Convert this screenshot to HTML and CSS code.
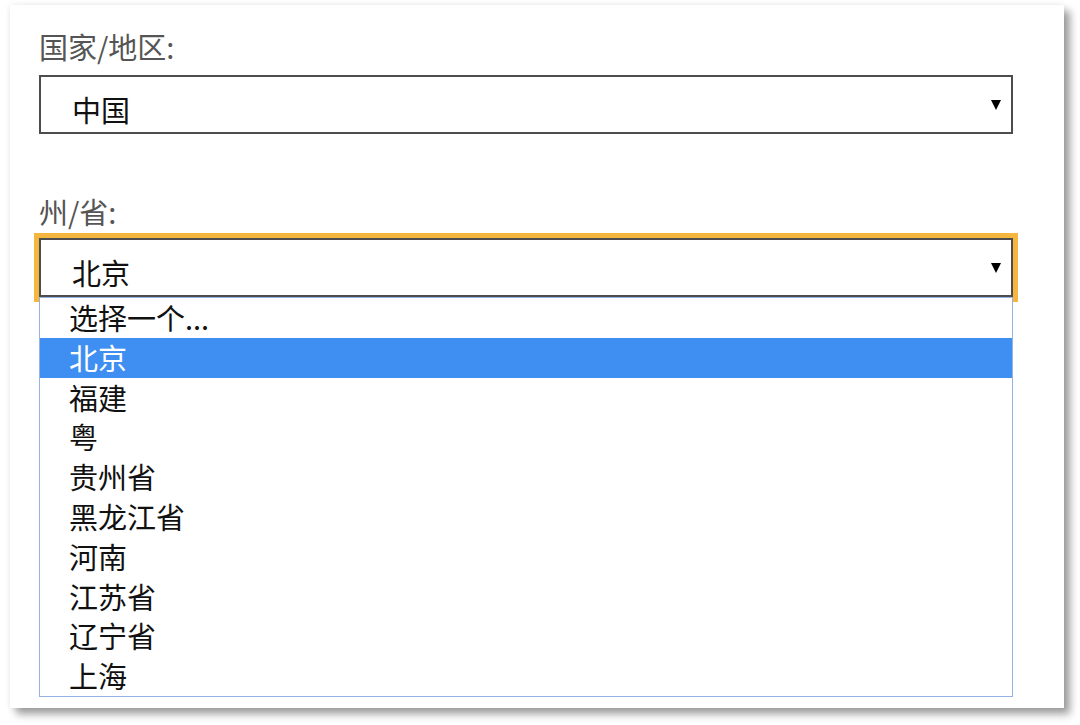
FILE: index.html
```html
<!DOCTYPE html>
<html lang="zh-CN">
<head>
<meta charset="utf-8">
<title>州/省</title>
<link rel="stylesheet" href="styles.css">
</head>
<body>
<div class="card">
  <div class="field">
    <div class="label">国家/地区:</div>
    <div class="select">
      <span class="value">中国</span>
      <span class="arrow"></span>
    </div>
  </div>
  <div class="field field-second">
    <div class="label">州/省:</div>
    <div class="select focused">
      <span class="value">北京</span>
      <span class="arrow"></span>
    </div>
    <ul class="dropdown">
      <li class="option">选择一个...</li>
      <li class="option selected">北京</li>
      <li class="option">福建</li>
      <li class="option">粤</li>
      <li class="option">贵州省</li>
      <li class="option">黑龙江省</li>
      <li class="option">河南</li>
      <li class="option">江苏省</li>
      <li class="option">辽宁省</li>
      <li class="option">上海</li>
    </ul>
  </div>
</div>
</body>
</html>
```
FILE: styles.css
```css
html, body {
  margin: 0;
  padding: 0;
  background: #ffffff;
}
body {
  width: 1080px;
  height: 725px;
  overflow: hidden;
  font-family: "Microsoft YaHei", "Noto Sans CJK SC", "Noto Sans", sans-serif;
}
.card {
  box-sizing: border-box;
  width: 1054px;
  height: 703px;
  margin: 5px 0 0 10px;
  padding: 21px 0 0 29px;
  background: #ffffff;
  box-shadow: 6px 6px 8px rgba(0, 0, 0, 0.38), 0 0 6px rgba(0, 0, 0, 0.08);
}
.field {
  width: 974px;
}
.field-second {
  margin-top: 57px;
}
.label {
  font-size: 29px;
  line-height: 40px;
  color: #555555;
  margin-bottom: 9px;
}
.select {
  box-sizing: border-box;
  height: 59px;
  border: 2px solid #4d4d4d;
  padding: 8px 10px 0 31px;
  display: flex;
  align-items: center;
  justify-content: space-between;
  background: #ffffff;
  font-size: 29px;
  color: #111111;
}
.field-second .label {
  margin-bottom: 7px;
}
.select.focused {
  outline: 5px solid #f4b63f;
}
.arrow {
  width: 0;
  height: 0;
  border-left: 5.5px solid transparent;
  border-right: 5.5px solid transparent;
  border-top: 10px solid #000000;
  margin-top: -8px;
}
.dropdown {
  position: relative;
  z-index: 1;
  list-style: none;
  margin: 0;
  padding: 0;
  border: 1.5px solid #94b2e6;
  border-top-width: 1px;
  background: #ffffff;
}
.option {
  height: 39.8px;
  line-height: 39.8px;
  padding-left: 29px;
  font-size: 29px;
  color: #111111;
}
.option.selected {
  background: #3e8ff1;
  color: #ffffff;
}
```
